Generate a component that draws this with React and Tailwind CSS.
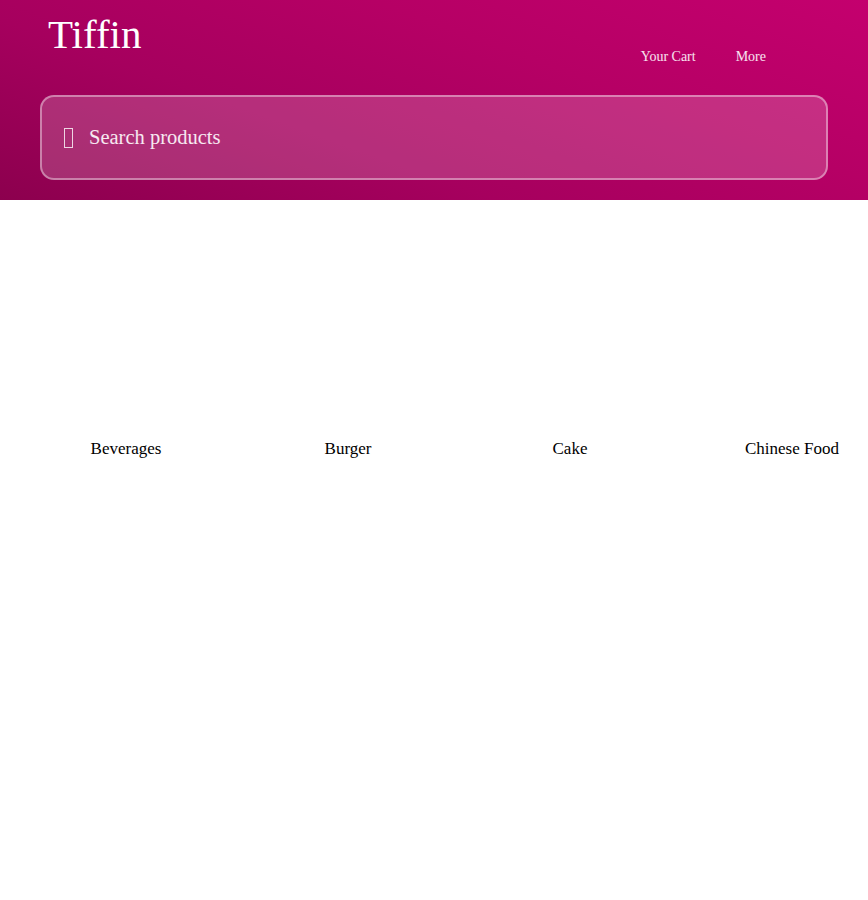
export default function App() {
  const cats = ["Beverages", "Burger", "Cake", "Chinese Food"];
  return (
    <div className="min-h-[900px] bg-white" style={{ fontFamily: '"Liberation Serif", "Times New Roman", serif' }}>
      <header className="h-[200px] bg-[linear-gradient(20deg,#8c004e_0%,#a6005e_35%,#b60065_65%,#c4006e_100%)] px-[40px] pt-[11px]">
        <div className="flex items-start justify-between">
          <h1 className="pl-[8px] text-[41px] leading-[46px] text-white">Tiffin</h1>
          <nav className="mr-[62px] mt-[36px] flex gap-[40px] text-[14px] leading-[20px] text-white/90">
            <a>Your Cart</a>
            <a>More</a>
          </nav>
        </div>
        <div className="mt-[28px] flex h-[85px] items-center rounded-[14px] border-2 border-white/40 bg-white/[0.18] pl-[22px]">
          <span className="mr-[16px] h-[20px] w-[9px] border-[1.5px] border-white/80"></span>
          <span className="text-[20.5px] text-white/90">Search products</span>
        </div>
      </header>
      <div className="flex overflow-hidden pl-[15px] pt-[238px]">
        {cats.map((c) => (
          <div key={c} className="w-[222px] shrink-0 text-center text-[17px] leading-[22px] text-black">
            {c}
          </div>
        ))}
      </div>
    </div>
  );
}
